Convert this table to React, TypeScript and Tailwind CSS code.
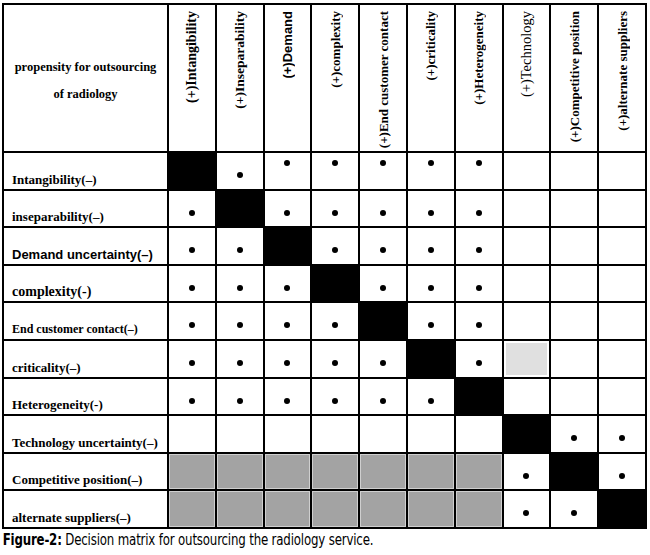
import React from "react";

type Cell = "" | "b" | "d" | "h" | "g" | "l";

const serif = "font-['Liberation_Serif','Times_New_Roman',serif]";
const sans = "font-['Liberation_Sans',Arial,sans-serif]";

const headers: { text: string; cls: string }[] = [
  { text: "(+)Intangibility", cls: `${serif} font-bold text-[14px]` },
  { text: "(+)Inseparability", cls: `${serif} font-bold text-[13.5px]` },
  { text: "(+)Demand", cls: `${sans} font-bold text-[13px]` },
  { text: "(+)complexity", cls: `${serif} font-bold text-[13px]` },
  { text: "(+)End customer contact", cls: `${serif} font-bold text-[13px]` },
  { text: "(+)criticality", cls: `${serif} font-bold text-[13px]` },
  { text: "(+)Heterogeneity", cls: `${serif} font-bold text-[13px]` },
  { text: "(+)Technology", cls: `${serif} text-[14.5px]` },
  { text: "(+)Competitive position", cls: `${serif} font-bold text-[13px]` },
  { text: "(+)alternate suppliers", cls: `${serif} font-bold text-[13px]` },
];

const rows: { label: string; cls: string; cells: Cell[] }[] = [
  { label: "Intangibility(–)", cls: `${serif} font-bold text-[13px]`, cells: ["b", "d", "h", "h", "h", "h", "h", "", "", ""] },
  { label: "inseparability(–)", cls: `${serif} font-bold text-[13px]`, cells: ["d", "b", "d", "d", "d", "d", "d", "", "", ""] },
  { label: "Demand uncertainty(–)", cls: `${sans} font-bold text-[13px]`, cells: ["d", "d", "b", "d", "d", "d", "d", "", "", ""] },
  { label: "complexity(-)", cls: `${serif} font-bold text-[14px]`, cells: ["d", "d", "d", "b", "d", "d", "d", "", "", ""] },
  { label: "End customer contact(–)", cls: `${serif} font-bold text-[12px]`, cells: ["d", "d", "d", "d", "b", "d", "d", "", "", ""] },
  { label: "criticality(–)", cls: `${serif} font-bold text-[13px]`, cells: ["d", "d", "d", "d", "d", "b", "d", "l", "", ""] },
  { label: "Heterogeneity(-)", cls: `${serif} font-bold text-[13px]`, cells: ["d", "d", "d", "d", "d", "d", "b", "", "", ""] },
  { label: "Technology uncertainty(–)", cls: `${serif} font-bold text-[13px]`, cells: ["", "", "", "", "", "", "", "b", "d", "d"] },
  { label: "Competitive position(–)", cls: `${serif} font-bold text-[13px]`, cells: ["g", "g", "g", "g", "g", "g", "g", "d", "b", "d"] },
  { label: "alternate suppliers(–)", cls: `${serif} font-bold text-[13px]`, cells: ["g", "g", "g", "g", "g", "g", "g", "d", "d", "b"] },
];

function MatrixCell({ kind }: { kind: Cell }) {
  if (kind === "b") return <div className="bg-black" />;
  if (kind === "g")
    return <div className="bg-[#a3a3a3] border border-[#cfcfcf]" />;
  if (kind === "l")
    return <div className="bg-[#e0e0e0] border-2 border-white" />;
  if (kind === "d")
    return (
      <div className="bg-white flex justify-center items-start">
        <div className="mt-[19px] w-[6px] h-[6px] rounded-full bg-black" />
      </div>
    );
  if (kind === "h")
    return (
      <div className="bg-white flex justify-center items-start">
        <div className="mt-[7px] w-[6px] h-[6px] rounded-full bg-black" />
      </div>
    );
  return <div className="bg-white" />;
}

export default function App() {
  return (
    <div className="w-[650px] h-[555px] bg-white overflow-hidden">
      <div className="ml-[2px] mt-[3px] w-[645px] h-[526px] bg-black p-[2px] grid grid-cols-[163px_repeat(10,1fr)] grid-rows-[146px_repeat(10,1fr)] gap-[2px] text-black">
        <div className={`bg-white flex flex-col items-center justify-center pt-[6px] leading-[27px] ${serif} font-bold text-[12.5px]`}>
          <span>propensity for outsourcing</span>
          <span>of radiology</span>
        </div>
        {headers.map((h, i) => (
          <div key={i} className="bg-white flex justify-center items-start pt-[6px]">
            <span className={`[writing-mode:vertical-rl] rotate-180 whitespace-nowrap leading-none ${h.cls}`}>
              {h.text}
            </span>
          </div>
        ))}
        {rows.map((r, ri) => (
          <React.Fragment key={ri}>
            <div className={`bg-white flex items-end pl-[8px] pb-[2px] leading-[15px] whitespace-nowrap ${r.cls}`}>
              {r.label}
            </div>
            {r.cells.map((c, ci) => (
              <MatrixCell key={ci} kind={c} />
            ))}
          </React.Fragment>
        ))}
      </div>
      <div className="pl-[3px] mt-[2px] w-[700px] origin-left scale-x-[0.875] whitespace-nowrap text-[15px] leading-[18px] font-['Liberation_Sans_Narrow','DejaVu_Sans_Condensed','Roboto',sans-serif] tracking-[-0.2px] text-black">
        <span className="font-bold">Figure-2:</span> Decision matrix for outsourcing the radiology service.
      </div>
    </div>
  );
}
